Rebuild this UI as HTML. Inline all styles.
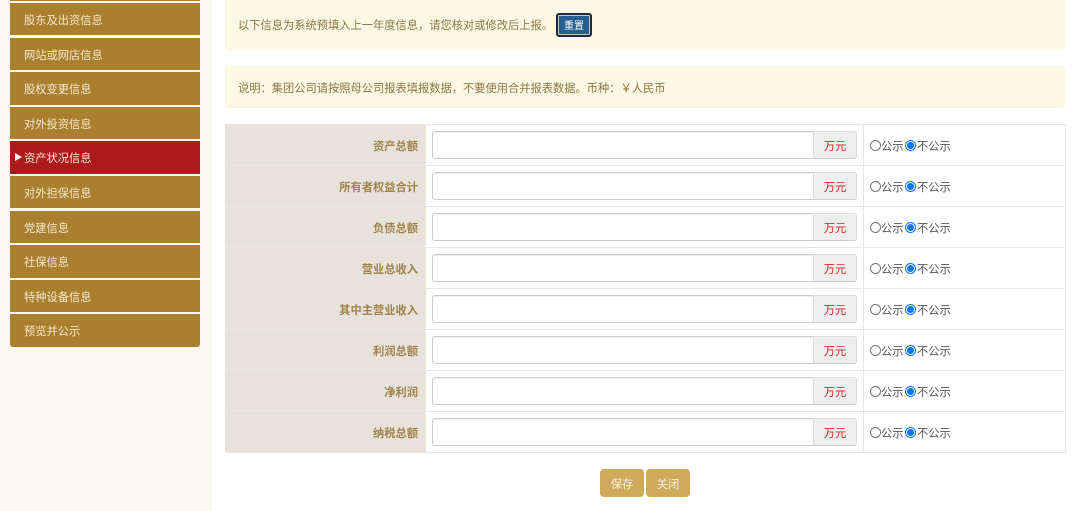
<!DOCTYPE html>
<html lang="zh">
<head>
<meta charset="utf-8">
<style>
html,body{margin:0;padding:0;width:1080px;height:511px;overflow:hidden;background:#fff;}
body{position:relative;font-family:"Liberation Sans","Noto Sans CJK SC",sans-serif;font-size:11.25px;}
div,span{position:absolute;box-sizing:border-box;white-space:nowrap;}
#side{left:0;top:0;width:212px;height:511px;background:#faf8f0;}
.m{left:10px;width:189.5px;height:32.4px;background:#aa7f2e;color:#f5e8cf;line-height:36px;padding-left:14px;}
.m.on{background:#ad1a1c;color:#fbe6d4;}
.alert{left:225px;width:840px;background:#fdf8e3;border:1px solid #fbf5df;border-radius:3px;color:#8d7647;padding-left:12px;}
.btn{left:556px;top:13px;width:36px;height:24px;background:#285f92;border:2px solid #1c2b3c;outline:1px solid #c8c8c8;outline-offset:-3px;border-radius:3px;color:#fff;font-size:10px;line-height:23px;text-align:center;}
.lab{left:225px;width:201px;height:41px;background:#e7e3dc;border-bottom:1px solid #e9e6e1;}
.lt{left:225px;width:193px;height:41px;line-height:47px;text-align:right;font-weight:bold;color:#a2824a;}
.h{left:225px;width:840px;height:1px;background:#e6e6e6;}
.v{top:124px;width:1px;height:329px;background:#e6e6e6;}
.inp{left:432px;width:382px;height:28px;background:#fff;border:1px solid #ccc;border-radius:3px 0 0 3px;box-shadow:inset 0 1px 1px rgba(0,0,0,.07);}
.add{left:813px;width:44px;height:28px;background:#eee;border:1px solid #ddd;border-bottom-color:#ccc;border-radius:0 3px 3px 0;color:#d9262c;text-align:center;line-height:31px;}
.r{width:11px;height:11px;border-radius:50%;border:1px solid #767676;background:#fff;}
.r.c{border:1px solid #0a75ff;}
.r.c:after{content:"";position:absolute;left:1px;top:1px;width:7px;height:7px;border-radius:50%;background:#0a75ff;}
.t{color:#555;line-height:16px;margin-top:1px;}
.b{top:469px;width:44px;height:28px;background:#d0aa5c;border-radius:4px;color:#fbf3e2;text-align:center;line-height:33px;}
</style>
</head>
<body>
<div id="side"></div>
<div class="m" style="top:-31.6px"></div>
<div class="m" style="top:3px">股东及出资信息</div>
<div class="m" style="top:37.6px">网站或网店信息</div>
<div class="m" style="top:72.2px">股权变更信息</div>
<div class="m" style="top:106.8px">对外投资信息</div>
<div class="m on" style="top:141.4px">资产状况信息</div>
<div style="left:14.5px;top:152.5px;width:0;height:0;border-left:7px solid #fff;border-top:4px solid transparent;border-bottom:4px solid transparent"></div>
<div class="m" style="top:176px">对外担保信息</div>
<div class="m" style="top:210.6px">党建信息</div>
<div class="m" style="top:245.2px">社保信息</div>
<div class="m" style="top:279.8px">特种设备信息</div>
<div class="m" style="top:314.4px;border-radius:0 0 3px 3px">预览并公示</div>

<div class="alert" style="top:-2px;height:52px;line-height:55px">以下信息为系统预填入上一年度信息，请您核对或修改后上报。</div>
<div class="btn">重置</div>
<div class="alert" style="top:66px;height:42px;line-height:45px">说明：集团公司请按照母公司报表填报数据，不要使用合并报表数据。币种：￥人民币</div>

<div class="lab" style="top:124px"></div><div class="lab" style="top:165px"></div><div class="lab" style="top:206px"></div><div class="lab" style="top:247px"></div>
<div class="lab" style="top:288px"></div><div class="lab" style="top:329px"></div><div class="lab" style="top:370px"></div><div class="lab" style="top:411px;height:42px"></div>

<div class="h" style="top:124px"></div><div class="h" style="top:165px"></div><div class="h" style="top:206px"></div><div class="h" style="top:247px"></div>
<div class="h" style="top:288px"></div><div class="h" style="top:329px"></div><div class="h" style="top:370px"></div><div class="h" style="top:411px"></div><div class="h" style="top:452px"></div>
<div class="v" style="left:863px"></div><div class="v" style="left:1065px"></div>

<div class="lt" style="top:124px">资产总额</div><div class="inp" style="top:131px"></div><div class="add" style="top:131px">万元</div>
<div class="r" style="left:870px;top:140px"></div><span class="t" style="left:881px;top:138px">公示</span><div class="r c" style="left:905px;top:140px"></div><span class="t" style="left:917px;top:138px">不公示</span>

<div class="lt" style="top:165px">所有者权益合计</div><div class="inp" style="top:172px"></div><div class="add" style="top:172px">万元</div>
<div class="r" style="left:870px;top:181px"></div><span class="t" style="left:881px;top:179px">公示</span><div class="r c" style="left:905px;top:181px"></div><span class="t" style="left:917px;top:179px">不公示</span>

<div class="lt" style="top:206px">负债总额</div><div class="inp" style="top:213px"></div><div class="add" style="top:213px">万元</div>
<div class="r" style="left:870px;top:222px"></div><span class="t" style="left:881px;top:220px">公示</span><div class="r c" style="left:905px;top:222px"></div><span class="t" style="left:917px;top:220px">不公示</span>

<div class="lt" style="top:247px">营业总收入</div><div class="inp" style="top:254px"></div><div class="add" style="top:254px">万元</div>
<div class="r" style="left:870px;top:263px"></div><span class="t" style="left:881px;top:261px">公示</span><div class="r c" style="left:905px;top:263px"></div><span class="t" style="left:917px;top:261px">不公示</span>

<div class="lt" style="top:288px">其中主营业收入</div><div class="inp" style="top:295px"></div><div class="add" style="top:295px">万元</div>
<div class="r" style="left:870px;top:304px"></div><span class="t" style="left:881px;top:302px">公示</span><div class="r c" style="left:905px;top:304px"></div><span class="t" style="left:917px;top:302px">不公示</span>

<div class="lt" style="top:329px">利润总额</div><div class="inp" style="top:336px"></div><div class="add" style="top:336px">万元</div>
<div class="r" style="left:870px;top:345px"></div><span class="t" style="left:881px;top:343px">公示</span><div class="r c" style="left:905px;top:345px"></div><span class="t" style="left:917px;top:343px">不公示</span>

<div class="lt" style="top:370px">净利润</div><div class="inp" style="top:377px"></div><div class="add" style="top:377px">万元</div>
<div class="r" style="left:870px;top:386px"></div><span class="t" style="left:881px;top:384px">公示</span><div class="r c" style="left:905px;top:386px"></div><span class="t" style="left:917px;top:384px">不公示</span>

<div class="lt" style="top:411px">纳税总额</div><div class="inp" style="top:418px"></div><div class="add" style="top:418px">万元</div>
<div class="r" style="left:870px;top:427px"></div><span class="t" style="left:881px;top:425px">公示</span><div class="r c" style="left:905px;top:427px"></div><span class="t" style="left:917px;top:425px">不公示</span>

<div class="b" style="left:600px">保存</div>
<div class="b" style="left:646px">关闭</div>
</body>
</html>
